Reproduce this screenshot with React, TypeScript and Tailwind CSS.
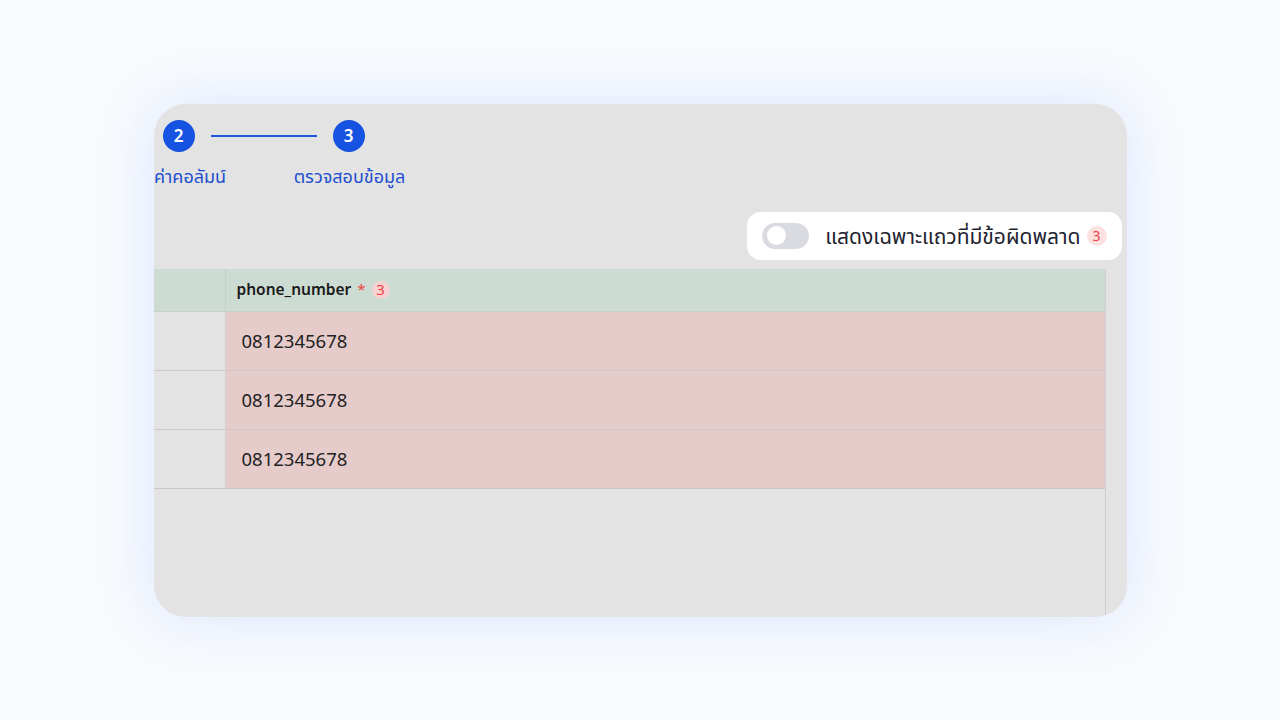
import React from 'react';

const rows = ['0812345678', '0812345678', '0812345678'];

const steps = [
  { n: 2, label: 'ตั้งค่าคอลัมน์' },
  { n: 3, label: 'ตรวจสอบข้อมูล' },
];

function Stepper() {
  return (
    <div className="flex items-start ml-[-40px] mt-4">
      {steps.map((s, i) => (
        <React.Fragment key={s.n}>
          {i > 0 && <div className="w-[106px] h-[2px] -mx-[33px] mt-[15px] bg-[#1d57e0]" />}
          <div className="w-[130px] flex flex-col items-center">
            <div className="w-8 h-8 rounded-full bg-[#1553e0] text-white flex items-center justify-center text-[17px] font-semibold">
              {s.n}
            </div>
            <span className="mt-[12px] ml-[2px] text-[18px] leading-6 text-[#1d4fd0] whitespace-nowrap">{s.label}</span>
          </div>
        </React.Fragment>
      ))}
    </div>
  );
}

function ErrorToggle() {
  return (
    <div className="flex justify-end pr-[5px] mt-[24px]">
      <div className="h-12 bg-white rounded-[14px] flex items-center pl-[15px] pr-[15px]">
        <div className="w-[47px] h-[26px] rounded-full bg-[#d9dbe0] flex items-center">
          <div className="w-[19px] h-[19px] rounded-full bg-white ml-[5px]" />
        </div>
        <span className="ml-4 text-[21px] leading-7 text-[#1f2430]">แสดงเฉพาะแถวที่มีข้อผิดพลาด</span>
        <span className="ml-[6px] w-5 h-5 rounded-full bg-[#fde1e1] text-[#ef4444] text-[14px] flex items-center justify-center">3</span>
      </div>
    </div>
  );
}

function ErrorTable() {
  return (
    <div className="flex-1 mt-[9px] ml-[-48px] mr-[21px] border-r border-[#cfcfcf] flex flex-col">
      <div className="flex h-[43px] bg-[#cddcd3] border-b border-[#c9cfcb]">
        <div className="w-[120px] border-r border-[#c3d0c8]" />
        <div className="flex-1 flex items-center pl-[11px]">
          <span className="text-[15.5px] font-semibold text-[#1a1a1a]">phone_number</span>
          <span className="ml-[6px] text-[15px] text-[#ef4444]">*</span>
          <span className="ml-[6px] w-[18px] h-[18px] rounded-full bg-[#f6d2d3] text-[#ef4444] text-[15px] flex items-center justify-center">3</span>
        </div>
      </div>
      {rows.map((r, i) => (
        <div key={i} className="flex h-[59px] border-b border-[#cfc7c7]">
          <div className="w-[120px] border-r border-[#d0d0d0]" />
          <div className="flex-1 bg-[#e6cbcb] flex items-center pl-4 text-[18.5px] text-[#222]">{r}</div>
        </div>
      ))}
    </div>
  );
}

export default function App() {
  return (
    <div
      className="w-screen h-screen bg-[#f8fafd] flex items-center justify-center"
      style={{ fontFamily: '"Noto Sans", "Noto Sans Thai", "Open Sans", sans-serif' }}
    >
      <div className="w-[973px] h-[513px] rounded-[32px] bg-[#e3e3e3] overflow-hidden flex flex-col shadow-[0_0_60px_rgba(96,140,255,0.18)]">
        <Stepper />
        <ErrorToggle />
        <ErrorTable />
      </div>
    </div>
  );
}
